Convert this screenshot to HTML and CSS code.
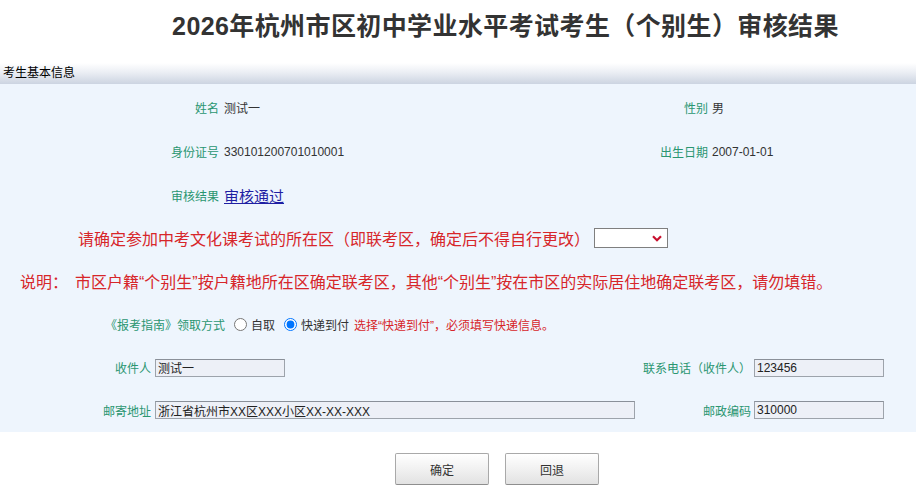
FILE: index.html
```html
<!DOCTYPE html>
<html lang="zh-CN">
<head>
    <meta charset="UTF-8">
    <title>审核结果</title>
    <link rel="stylesheet" href="styles.css">
</head>
<body>

    <h1 class="page-title">2026年杭州市区初中学业水平考试考生（个别生）审核结果</h1>

    <div class="section-bar">考生基本信息</div>

    <div class="section-body">
        <!-- Basic info -->
        <div class="info-grid">
            <div class="row-cell label">姓名</div>
            <div class="row-cell value">测试一</div>
            <div class="row-cell label">性别</div>
            <div class="row-cell value value-right">男</div>

            <div class="row-cell label">身份证号</div>
            <div class="row-cell value">330101200701010001</div>
            <div class="row-cell label">出生日期</div>
            <div class="row-cell value value-right">2007-01-01</div>

            <div class="row-cell label">审核结果</div>
            <div class="row-cell value"><a class="result-link" href="#">审核通过</a></div>
        </div>

        <!-- District choice -->
        <div class="line district-line">
            <span class="warn-big">请确定参加中考文化课考试的所在区（即联考区，确定后不得自行更改）</span>
            <span class="select-wrap">
                <select class="district-select"><option></option></select>
                <svg class="select-arrow" width="10" height="7" viewBox="0 0 10 7"><path d="M1 1.2 L5 5.2 L9 1.2" fill="none" stroke="#c8102e" stroke-width="2.2"/></svg>
            </span>
        </div>

        <div class="line note-line">
            <span class="warn-big">说明：</span>
            <span class="warn-big note-text">市区户籍“个别生”按户籍地所在区确定联考区，其他“个别生”按在市区的实际居住地确定联考区，请勿填错。</span>
        </div>

        <!-- Delivery -->
        <div class="line delivery-line">
            <span class="label-inline">《报考指南》领取方式</span>
            <input type="radio" name="way" id="way-self" class="radio">
            <label for="way-self" class="radio-text">自取</label>
            <input type="radio" name="way" id="way-post" class="radio" checked>
            <label for="way-post" class="radio-text">快递到付</label>
            <span class="warn-small">选择“快递到付”，必须填写快递信息。</span>
        </div>

        <div class="post-grid">
            <div class="row-cell label">收件人</div>
            <div class="row-cell field"><input class="text-input short" type="text" value="测试一"></div>
            <div class="row-cell label">联系电话（收件人）</div>
            <div class="row-cell field field-right"><input class="text-input short" type="text" value="123456"></div>

            <div class="row-cell label">邮寄地址</div>
            <div class="row-cell field"><input class="text-input long" type="text" value="浙江省杭州市XX区XXX小区XX-XX-XXX"></div>
            <div class="row-cell label">邮政编码</div>
            <div class="row-cell field field-right"><input class="text-input short" type="text" value="310000"></div>
        </div>
    </div>

    <div class="button-row">
        <button class="btn">确定</button>
        <button class="btn">回退</button>
    </div>

</body>
</html>
```

FILE: styles.css
```css
/* Basic styling */
body {
    margin: 0;
    font-family: "Liberation Sans", "Noto Sans CJK SC", sans-serif;
    font-size: 12px;
    color: #333;
    background: #fff;
}

.page-title {
    margin: 8px 0 19px;
    padding-left: 95px;
    text-align: center;
    font-size: 25px;
    line-height: 36px;
    letter-spacing: 0.4px;
    font-weight: bold;
    color: #333;
}

/* Section header */
.section-bar {
    height: 21px;
    line-height: 21px;
    padding-left: 3px;
    font-size: 12px;
    color: #000;
    background: linear-gradient(#ffffff, #ebeef4 45%, #ccd4e1);
}

.section-body {
    background-color: #eef5fd;
    padding: 1px 0 1px;
}

/* Label / value grids */
.info-grid {
    display: grid;
    grid-template-columns: 219px 305px 184px 1fr;
    grid-template-rows: 44px 45px 43px;
}

.row-cell {
    display: flex;
    align-items: center;
    white-space: nowrap;
}

.label {
    justify-content: flex-end;
    color: #2a9671;
}

.value {
    padding-left: 5px;
    color: #333;
}

.value-right {
    padding-left: 4px;
}

.result-link {
    font-size: 15px;
    color: #1f1fa3;
    text-decoration: underline;
}

/* Single lines */
.line {
    display: flex;
    align-items: center;
    white-space: nowrap;
}

.warn-big {
    font-size: 16px;
    color: #d7262a;
}

.district-line {
    height: 42px;
    padding-left: 78px;
}

.select-wrap {
    position: relative;
    margin-left: 4px;
    height: 20px;
}

.district-select {
    appearance: none;
    -webkit-appearance: none;
    width: 74px;
    height: 20px;
    border: 1px solid #7f7f7f;
    border-radius: 0;
    background: #fff;
    margin: 0;
    display: block;
}

.select-arrow {
    position: absolute;
    right: 6px;
    top: 7px;
}

.note-line {
    height: 44px;
    padding-left: 20px;
}

.note-text {
    margin-left: 7px;
}

.delivery-line {
    height: 43px;
    padding-left: 105px;
}

.label-inline {
    color: #2a9671;
}

.radio {
    width: 13px;
    height: 13px;
    margin: 0 4px 0 9px;
}

.radio-text {
    color: #333;
}

.warn-small {
    margin-left: 5px;
    color: #d7262a;
}

/* Postal fields */
.post-grid {
    display: grid;
    grid-template-columns: 151px 484px 116px 1fr;
    grid-template-rows: 43px 42px;
}

.field {
    padding-left: 4px;
}

.field-right {
    padding-left: 3px;
}

.text-input {
    box-sizing: border-box;
    height: 18px;
    margin: 0;
    padding: 0 2px;
    border: 1px solid #9da3ab;
    border-top-color: #8a9099;
    background-color: #edf0f7;
    font-family: "Liberation Sans", "Noto Sans CJK SC", sans-serif;
    font-size: 12px;
    color: #222;
}

.text-input.short {
    width: 130px;
}

.text-input.long {
    width: 480px;
}

/* Buttons */
.button-row {
    display: flex;
    gap: 16px;
    padding: 21px 0 0 395px;
}

.btn {
    width: 94px;
    height: 32px;
    border: 1px solid #a9a9a9;
    border-bottom-color: #8e8e8e;
    border-radius: 2px;
    background: linear-gradient(#ffffff, #f1f1f1 50%, #e2e2e2);
    font-family: "Liberation Sans", "Noto Sans CJK SC", sans-serif;
    font-size: 12px;
    color: #333;
    cursor: pointer;
}
```
